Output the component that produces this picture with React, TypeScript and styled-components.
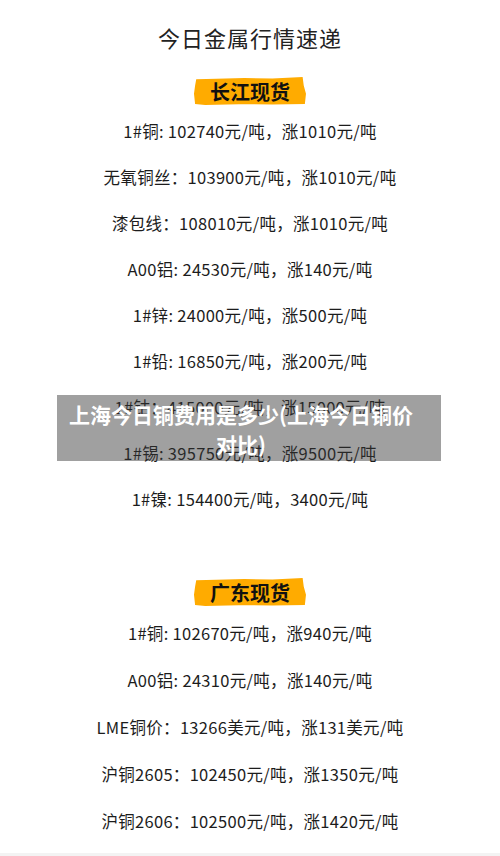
import React from "react";
import styled, { createGlobalStyle } from "styled-components";

interface ISection {
  title: string;
  rowHeight: number;
  rows: string[];
}

const sections: ISection[] = [
  {
    title: "长江现货",
    rowHeight: 46,
    rows: [
      "1#铜: 102740元/吨，涨1010元/吨",
      "无氧铜丝：103900元/吨，涨1010元/吨",
      "漆包线：108010元/吨，涨1010元/吨",
      "A00铝: 24530元/吨，涨140元/吨",
      "1#锌: 24000元/吨，涨500元/吨",
      "1#铅: 16850元/吨，涨200元/吨",
      "1#钴：415000元/吨，涨15000元/吨",
      "1#锡: 395750元/吨，涨9500元/吨",
      "1#镍: 154400元/吨，3400元/吨",
    ],
  },
  {
    title: "广东现货",
    rowHeight: 47,
    rows: [
      "1#铜: 102670元/吨，涨940元/吨",
      "A00铝: 24310元/吨，涨140元/吨",
      "LME铜价：13266美元/吨，涨131美元/吨",
      "沪铜2605：102450元/吨，涨1350元/吨",
      "沪铜2606：102500元/吨，涨1420元/吨",
    ],
  },
];

const App: React.FC = () => {
  return (
    <>
      <GlobalStyle />
      <Article>
        <Title>今日金属行情速递</Title>
        {sections.map((section) => (
          <Section key={section.title}>
            <Badge>{section.title}</Badge>
            <RowList>
              {section.rows.map((row) => (
                <Row key={row} $height={section.rowHeight}>
                  {row}
                </Row>
              ))}
            </RowList>
          </Section>
        ))}
        <Caption>上海今日铜费用是多少(上海今日铜价对比)</Caption>
      </Article>
    </>
  );
};

const GlobalStyle = createGlobalStyle`
  body {
    margin: 0;
    background: #f3f3f3;
    font-family: "Noto Sans CJK SC", "Noto Sans", sans-serif;
  }
`;

const Article = styled.div`
  position: relative;
  height: 853px;
  background: #fff;
  display: flex;
  flex-direction: column;
  align-items: center;
`;

const Title = styled.h1`
  margin: 0;
  height: 74px;
  display: flex;
  align-items: center;
  font-size: 22px;
  font-weight: 400;
  letter-spacing: 1px;
  color: #222;
`;

const Section = styled.section`
  display: flex;
  flex-direction: column;
  align-items: center;
  gap: 3px;

  & + & {
    margin-top: 53px;
  }
`;

const Badge = styled.div`
  width: 112px;
  height: 28px;
  margin-top: 3px;
  display: flex;
  align-items: center;
  justify-content: center;
  background: #ffab00;
  font-size: 20px;
  font-weight: 700;
  color: #111;
  clip-path: polygon(
    2% 8%, 20% 6%, 45% 4%, 70% 5%, 97% 0%, 98% 30%, 100% 60%, 99% 96%,
    70% 98%, 40% 97%, 10% 100%, 1% 96%, 0% 60%, 1% 30%
  );
`;

const RowList = styled.div`
  display: flex;
  flex-direction: column;
  align-items: center;
`;

const Row = styled.p<{ $height: number }>`
  margin: 0;
  height: ${({ $height }) => `${$height}px`};
  display: flex;
  align-items: center;
  font-size: 16.5px;
  letter-spacing: 0.3px;
  color: #1c1c1c;
  white-space: nowrap;
`;

const Caption = styled.div`
  position: absolute;
  top: 395px;
  left: 57px;
  width: 384px;
  height: 66px;
  box-sizing: border-box;
  padding: 2px 22px 0 6px;
  display: flex;
  align-items: center;
  justify-content: center;
  text-align: center;
  background: rgba(53, 53, 53, 0.47);
  color: #fff;
  font-size: 21px;
  font-weight: 700;
  line-height: 30px;
`;

export default App;
